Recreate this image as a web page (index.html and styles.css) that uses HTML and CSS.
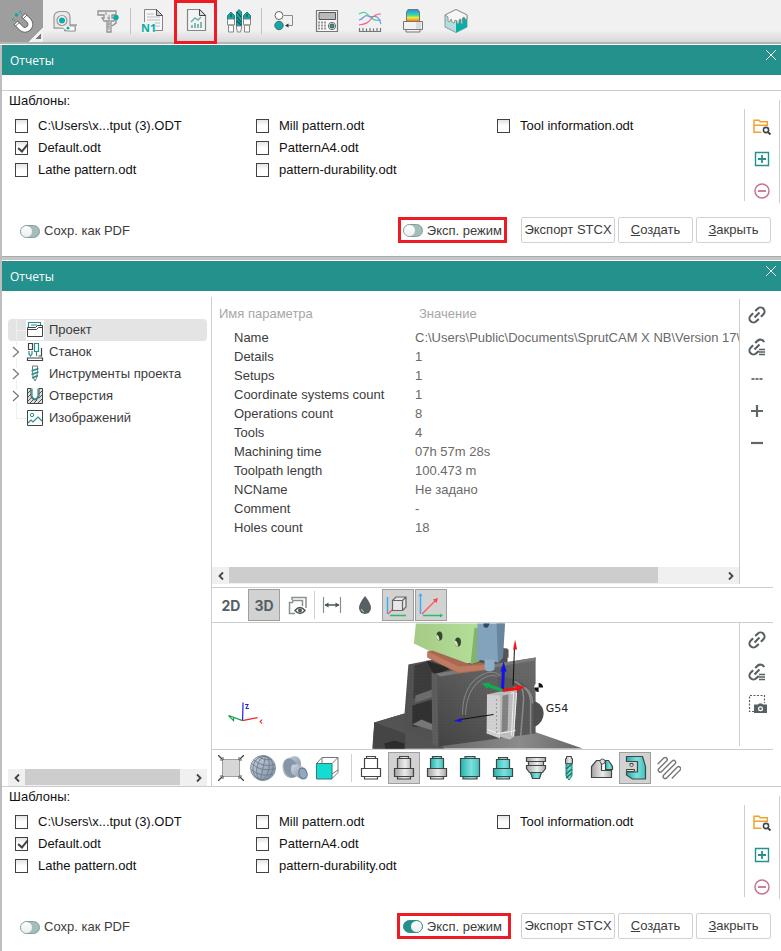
FILE: index.html
```html
<!DOCTYPE html>
<html lang="ru">
<head>
<meta charset="utf-8">
<meta name="viewport" content="width=device-width, initial-scale=1">
<title>Отчеты</title>
<link rel="stylesheet" href="styles.css">
</head>
<body>
<svg class="defs" aria-hidden="true">
  <defs>
    <linearGradient id="teal" x1="0" x2="1"><stop offset="0" stop-color="#1fb3ae"/><stop offset=".55" stop-color="#7fe0dc"/><stop offset="1" stop-color="#3cc4bf"/></linearGradient>
    <linearGradient id="steel" x1="0" x2="1"><stop offset="0" stop-color="#a2a2a2"/><stop offset=".55" stop-color="#ececec"/><stop offset="1" stop-color="#aaa"/></linearGradient>
    <linearGradient id="metal" x1="0" y1="0" x2="1" y2="1"><stop offset="0" stop-color="#cfd8e2"/><stop offset="1" stop-color="#7a899a"/></linearGradient>
    <linearGradient id="rainbow" x1="0" x2="0" y1="0" y2="1"><stop offset="0" stop-color="#3f7be8"/><stop offset=".2" stop-color="#19b6e6"/><stop offset=".45" stop-color="#41d98b"/><stop offset=".65" stop-color="#e6ef3a"/><stop offset=".85" stop-color="#ff9a1f"/><stop offset="1" stop-color="#f0402c"/></linearGradient>
    <symbol id="i-folder" viewBox="0 0 20 20"><path d="M9.500 15.300H2V3.200h5l1.200 1.600H15.300V8.300H2.500" fill="none" stroke="#f5a02c" stroke-width="1.500"/><circle cx="14" cy="13" r="2.600" fill="#fff" stroke="#3f4a4c" stroke-width="1.600"/><path d="m15.800 15 2.700 2.500" stroke="#3f4a4c" stroke-width="2"/></symbol>
    <symbol id="i-add" viewBox="0 0 20 20"><path d="M3.500 3.500h13v13h-13z" fill="#fff" stroke="#25918d" stroke-width="1.400"/><path d="M10 6v8M6 10h8" stroke="#25918d" stroke-width="1.800"/></symbol>
    <symbol id="i-del" viewBox="0 0 20 20"><circle cx="10" cy="10" r="7" fill="#fff" stroke="#c6748d" stroke-width="1.500"/><path d="M6 10h8" stroke="#c6748d" stroke-width="1.800"/></symbol>
    <symbol id="i-link" viewBox="0 0 20 20"><g transform="rotate(-45 10 10)" fill="none" stroke="#566062" stroke-width="2.100"><path d="M8.500 6H5a4 4 0 0 0 0 8h3.500M11.500 6H15a4 4 0 0 1 0 8h-3.500M6.500 10h7"/></g></symbol>
    <symbol id="i-linklist" viewBox="0 0 20 20"><g transform="rotate(-45 10 10)" fill="none" stroke="#566062" stroke-width="2.100"><path d="M8.500 6H5a4 4 0 0 0 0 8h3.500M11.500 6H15a4 4 0 0 1 3.500 5.500M6.500 10h7"/></g><path d="M12 12.500h6M12 15h6M12 17.500h6" stroke="#566062" stroke-width="1.300"/></symbol>
    <symbol id="i-close" viewBox="0 0 12 12"><path d="m1 1 10 10M11 1 1 11" stroke="#fff" stroke-width="1"/></symbol>
    <symbol id="i-left" viewBox="0 0 8 10"><path d="M6 1.500 2.500 5 6 8.500" fill="none" stroke="#444" stroke-width="1.800"/></symbol>
    <symbol id="i-right" viewBox="0 0 8 10"><path d="M2 1.500 5.500 5 2 8.500" fill="none" stroke="#444" stroke-width="1.800"/></symbol>
    <symbol id="i-chevron" viewBox="0 0 8 12"><path d="m1 1 5.500 5L1 11" fill="none" stroke="#777" stroke-width="1.200"/></symbol>
  </defs>
</svg>

<nav class="main-bar" aria-label="Панель инструментов">
  <button class="tool tool-active" aria-label="Привязка"><svg viewBox="0 0 26 26"><path d="m6.500 14.500 6 6a5.400 5.400 0 0 0 7.600-7.600l-6-6" fill="none" stroke="#707070" stroke-width="6"/><path d="m7.100 15.100 5.400 5.400a5.400 5.400 0 0 0 7.600-7.600l-5.400-5.400" fill="none" stroke="#fff" stroke-width="4"/><path d="m10.500 14.200-4 4M18 7l-4 4" stroke="#707070" stroke-width="1"/><circle cx="7.500" cy="7" r="1.700" fill="#0aa"/><path d="m3 12 1.500-1.500M10.500 4.500 12 3M5 13l1-1M12 6l1-1" stroke="#0c8f8c" stroke-width="1"/></svg></button>
  <button class="tool" aria-label="Рулетка"><svg viewBox="0 0 26 26"><path d="M2 20V9q0-5 6-5.500h5q5 .5 5 5.500v11z" fill="#e9e9e9" stroke="#999" stroke-width="1.200"/><path d="M18 17h7M12 22.500h11v-4.500" fill="none" stroke="#999" stroke-width="1.600"/><path d="M2 20h9l4 3h8v-5h-5" fill="#fff" stroke="#999"/><circle cx="10" cy="12.500" r="5" fill="#f7f7f7" stroke="#999" stroke-width="1.200"/><circle cx="10" cy="12.500" r="3" fill="#0aada8"/><circle cx="16" cy="20" r="1.600" fill="#0aada8"/></svg></button>
  <button class="tool" aria-label="Штангенциркуль"><svg viewBox="0 0 26 26"><path d="M3 3h18v4h-4v3h3l-1 3h-3v11h-4V13H9L7 10h2V7H3z" fill="#ececec" stroke="#929292" stroke-width="1.300"/><path d="M11 4v3M14 7v15M12 10h3M12 13h3M12 16h3M12 19h2" stroke="#929292"/><path d="M21 7v8l-4 3" fill="none" stroke="#929292" stroke-width="1.500"/><circle cx="21" cy="9.500" r="2.700" fill="#0aada8"/></svg></button>
  <span class="bar-sep"></span>
  <button class="tool" aria-label="Управляющая программа"><svg viewBox="0 0 26 26"><path d="M4.500 1.500h12l6 6v15h-18z" fill="#f7f7f7" stroke="#868686"/><path d="M16.500 1.500v6h6z" fill="#ccc" stroke="#555"/><path d="M7 6h7M7 9h13M7 12h13M7 15h13M7 18h13" stroke="#bbb"/><path d="M1 14h14v11H1z" fill="#f3f3f3"/><text x="1" y="24" class="icon-n1">N1</text></svg></button>
  <button class="tool tool-marked" aria-label="Отчеты"><svg viewBox="0 0 26 26"><path d="M4.500 1.500h12l6 6v15h-18z" fill="#f4f4f4" stroke="#868686" stroke-width="1.200"/><path d="M16.500 1.500v6h6z" fill="#ddd" stroke="#444"/><path d="M9 20v-3M12 20v-5M15 20v-4M18 20v-6" stroke="#6fb0ad" stroke-width="1.700"/><path d="m8 14 4-4 3 2 3-3" fill="none" stroke="#6fb0ad" stroke-width="1.400"/></svg></button>
  <button class="tool" aria-label="Инструменты"><svg viewBox="0 0 26 26"><path d="M1.500 11V7.500L5 4l3.500 3.500V11zM17.500 11V7.500L21 4l3.500 3.500V11zM10.500 18V4L13 1.500 15.500 4v14z" fill="#0aada8" stroke="#245e5c" stroke-width=".8"/><path d="m11 4 4 5M11 9l4 5M11 13l4 4M5 9V6M21 9V6" stroke="#17504e" stroke-width="1.100"/><path d="M1.500 11h7v6h-7zM17.500 11h7v6h-7zM2.500 17h5v7h-5zM18.500 17h5v7h-5zM10.500 18h5v2l-1 4h-3l-1-4z" fill="#fafafa" stroke="#888"/></svg></button>
  <span class="bar-sep"></span>
  <button class="tool" aria-label="Переходы"><svg viewBox="0 0 26 26"><path d="M13 7.500h8.500v10H16" fill="none" stroke="#8b8b8b"/><path d="m14 17.500 3.500-2v4z" fill="#333"/><circle cx="8" cy="7.500" r="4" fill="#fff" stroke="#666"/><circle cx="8" cy="17.500" r="4.200" fill="#0aada8" stroke="#566"/></svg></button>
  <button class="tool" aria-label="Стойка ЧПУ"><svg viewBox="0 0 26 26"><path d="M2.500 2.500h21v21h-21z" fill="#f7f7f7" stroke="#777" stroke-width="1.200"/><path d="M5 4.500h16.500v7H5z" fill="#b9b9b9" stroke="#555"/><path d="M4 14.500h9M4 17.500h9M4 20.500h9" stroke="#999" stroke-width="2" stroke-dasharray="2 1"/><circle cx="18" cy="18" r="3.600" fill="#fff" stroke="#666"/><circle cx="18" cy="18" r="2" fill="#0aada8" stroke="#444"/></svg></button>
  <button class="tool" aria-label="Графики"><svg viewBox="0 0 26 26"><g fill="none" stroke-width="1.200"><path d="M2 6c6-4 8 0 11 3s7 4 11 3" stroke="#4fd98a"/><path d="M2 12c5-1 5-6 9-4s6-1 9 1 3 5 4 7" stroke="#6a96f5"/><path d="M2 17c7-1 9-2 12-6s6-5 10-5" stroke="#f45a8c"/><path d="M2.500 20v3.500h21V20M6 23v-3M9.500 23v-2.500M13 23v-3M16.500 23v-2.500M20 23v-3" stroke="#777"/></g></svg></button>
  <button class="tool" aria-label="Патрон"><svg viewBox="0 0 26 26"><path d="M6.500 14V4l1.500-2.500h10L19.500 4v10z" fill="url(#rainbow)" stroke="#777"/><path d="M3.500 13.500h19v8h-2.500v2.500H6v-2.500H3.500z" fill="#f2f2f2" stroke="#777"/><path d="M16 14h5v7h-5z" fill="#ccc" opacity=".6"/><path d="M6 21.500h14" stroke="#777"/></svg></button>
  <button class="tool" aria-label="Заготовка"><svg viewBox="0 0 26 26"><path d="m13 1.500 11 5.500v12l-11 5.500L2 19V7z" fill="#b4dedb" stroke="#8a9a9a"/><path d="M13 12.500 24 7v12l-11 5.500z" fill="#0aada8"/><path d="m13 1.500 11 5.500v4l-1.500.5L21 9l-1.500 1v5.500l-1.500.5v-5l-2 1v3l-2 1v-3l-2-1-1 3-2-1-1-3-1 3-2-1V9L2 7z" fill="#f6f6f6" stroke="#808585" stroke-width=".8"/></svg></button>
</nav>

<main>
<section class="dialog" aria-label="Отчеты">
  <header class="title-bar"><h2>Отчеты</h2><button class="close" aria-label="Закрыть окно"><svg><use href="#i-close"/></svg></button></header>
  <div class="spacer"></div>
  <div class="templates">
    <div class="templates-top">
      <fieldset class="files">
        <legend>Шаблоны:</legend>
        <div class="file-grid">
          <label><input type="checkbox">C:\Users\x...tput (3).ODT</label>
          <label><input type="checkbox" checked>Default.odt</label>
          <label><input type="checkbox">Lathe pattern.odt</label>
          <label><input type="checkbox">Mill pattern.odt</label>
          <label><input type="checkbox">PatternA4.odt</label>
          <label><input type="checkbox">pattern-durability.odt</label>
          <label><input type="checkbox">Tool information.odt</label>
        </div>
      </fieldset>
      <div class="file-side"><div class="file-actions">
        <button aria-label="Открыть папку"><svg><use href="#i-folder"/></svg></button>
        <button aria-label="Добавить"><svg><use href="#i-add"/></svg></button>
        <button aria-label="Удалить"><svg><use href="#i-del"/></svg></button>
      </div></div>
    </div>
    <footer class="actions">
      <label class="switch"><input type="checkbox" role="switch">Сохр. как PDF</label>
      <label class="switch switch-marked"><input type="checkbox" role="switch">Эксп. режим</label>
      <div class="buttons">
        <button class="btn btn-wide">Экспорт STCX</button>
        <button class="btn"><u>С</u>оздать</button>
        <button class="btn"><u>З</u>акрыть</button>
      </div>
    </footer>
  </div>
</section>

<div class="gap"></div>

<section class="dialog" aria-label="Отчеты, экспертный режим">
  <header class="title-bar"><h2>Отчеты</h2><button class="close" aria-label="Закрыть окно"><svg><use href="#i-close"/></svg></button></header>
  <div class="report">
    <div class="tree-pane">
      <ul class="tree">
        <li class="leaf selected"><svg class="node-icon" viewBox="0 0 18 18"><path d="M2.500 6V1.500h12V5M5 4h6" fill="none" stroke="#25918d" stroke-width="1.200"/><path d="M1.500 15.500v-9h8l2-2h5v11zM1.500 8.500h9l2-2h4" fill="none" stroke="#444"/></svg>Проект</li>
        <li><svg class="chevron"><use href="#i-chevron"/></svg><svg class="node-icon" viewBox="0 0 18 18"><path d="M2.500.5h4v6h-4z" fill="none" stroke="#444" stroke-width="1.200"/><path d="M8.500.5h4v8h-4zM3 8v3l1.500 2L6 11V8M10.500 9v4" fill="none" stroke="#25918d" stroke-width="1.200"/><path d="M1.500 15h15v2.500h-15zM15.500 5v8h-3" fill="none" stroke="#444" stroke-width="1.200"/></svg>Станок</li>
        <li><svg class="chevron"><use href="#i-chevron"/></svg><svg class="node-icon" viewBox="0 0 18 18"><path d="M6.500 1h5v3l-.5 8-2 4-2-4-.5-8z" fill="none" stroke="#777"/><path d="m5.500 6 7-2.500M5.500 9.500l7-2.500M6 13l6-2.500" stroke="#25918d" stroke-width="1.700"/></svg>Инструменты проекта</li>
        <li><svg class="chevron"><use href="#i-chevron"/></svg><svg class="node-icon" viewBox="0 0 18 18"><path d="M1.500 1.500H5V9q1 4 4 4t4-4V1.500h3.500v15h-15z" fill="#ddd" stroke="#444"/><path d="m2 6 3-3M2 10l3-3M2 14l4-4M4 16l4-4M8 16l3-3M12 16l4-4M13 11l3-3M13 7l3-3" stroke="#555"/><path d="M6 1.500V9q1 3 3 3t3-3V1.500" fill="#fff" stroke="#25918d" stroke-width="1.200"/></svg>Отверстия</li>
        <li class="leaf last"><svg class="node-icon" viewBox="0 0 18 18"><path d="M1.500 1.500h15v15h-15z" fill="#fff" stroke="#444"/><circle cx="6" cy="6" r="1.700" fill="none" stroke="#25918d"/><path d="m2 14 3-3 2 2 5-5 4 4" fill="none" stroke="#25918d" stroke-width="1.200"/></svg>Изображений</li>
      </ul>
      <div class="scroll tree-scroll"><button aria-label="Влево"><svg><use href="#i-left"/></svg></button><span class="track"><span class="thumb thumb-tree"></span></span><button aria-label="Вправо"><svg><use href="#i-right"/></svg></button></div>
    </div>

    <div class="detail">
      <div class="params">
        <div class="params-main">
          <div class="table-wrap">
            <table>
              <thead><tr><th>Имя параметра</th><th>Значение</th></tr></thead>
              <tbody>
                <tr><td>Name</td><td>C:\Users\Public\Documents\SprutCAM X NB\Version 17\</td></tr>
                <tr><td>Details</td><td>1</td></tr>
                <tr><td>Setups</td><td>1</td></tr>
                <tr><td>Coordinate systems count</td><td>1</td></tr>
                <tr><td>Operations count</td><td>8</td></tr>
                <tr><td>Tools</td><td>4</td></tr>
                <tr><td>Machining time</td><td>07h 57m 28s</td></tr>
                <tr><td>Toolpath length</td><td>100.473 m</td></tr>
                <tr><td>NCName</td><td>Не задано</td></tr>
                <tr><td>Comment</td><td>-</td></tr>
                <tr><td>Holes count</td><td>18</td></tr>
              </tbody>
            </table>
          </div>
          <div class="scroll"><button aria-label="Влево"><svg><use href="#i-left"/></svg></button><span class="track"><span class="thumb"></span></span><button aria-label="Вправо"><svg><use href="#i-right"/></svg></button></div>
        </div>
        <div class="side-actions">
          <button aria-label="Ссылка"><svg><use href="#i-link"/></svg></button>
          <button aria-label="Список ссылок"><svg><use href="#i-linklist"/></svg></button>
          <button aria-label="Еще"><svg viewBox="0 0 20 20"><path d="M4.500 10h3M8.500 10h3M12.500 10h3" stroke="#777" stroke-width="2"/></svg></button>
          <button aria-label="Добавить параметр"><svg viewBox="0 0 20 20"><path d="M10 4v12M4 10h12" stroke="#5f6869" stroke-width="2.200"/></svg></button>
          <button aria-label="Убрать параметр"><svg viewBox="0 0 20 20"><path d="M4 10h12" stroke="#5f6869" stroke-width="2.200"/></svg></button>
        </div>
      </div>

      <div class="view-bar">
        <div class="group">
          <button class="mode">2D</button>
          <button class="mode pressed">3D</button>
          <button aria-label="Слои"><svg viewBox="0 0 26 26"><path d="M8 8V5.500h14V16" fill="none" stroke="#8a8f90" stroke-width="1.500"/><path d="M11 21.500H5.500v-11h3L9 8.500h9.500V14" fill="none" stroke="#8a8f90" stroke-width="1.500"/><path d="M11 18.500q5-6 10 0-5 6-10 0z" fill="#fff" stroke="#4f5759" stroke-width="1.500"/><circle cx="16" cy="18.500" r="2" fill="#4f5759"/></svg></button>
        </div>
        <span class="view-sep"></span>
        <div class="group">
          <button aria-label="Размеры"><svg viewBox="0 0 26 26"><path d="M4.500 5v16M21.500 5v16" stroke="#8a8f90" stroke-width="1.200"/><path d="M6 13h14" stroke="#4f5759" stroke-width="1.500"/><path d="m5.500 13 4-2.500v5zM20.500 13l-4-2.500v5z" fill="#4f5759"/></svg></button>
          <button aria-label="Жидкость"><svg viewBox="0 0 26 26"><path d="M13 4q6 7.500 6 12a6 6 0 0 1-12 0q0-4.500 6-12z" fill="#566062"/><path d="M9.500 17q.5 2.500 2.500 3" fill="none" stroke="#ccc"/></svg></button>
          <button class="pressed" aria-label="Габариты"><svg viewBox="0 0 26 26"><path d="M2.500 5v17" stroke="#42aaf0" stroke-width="1.500"/><path d="M5 23.500h16" stroke="#25bf6c" stroke-width="1.500"/><path d="m3 22 6-6" stroke="#f55" stroke-width="1.300"/><path d="M7.500 8.500h10v10h-10zM7.500 8.500l3.500-3.500h10v10l-3.500 3.500M17.500 8.500 21 5" fill="#e6e6e6" stroke="#666" stroke-width="1.200"/></svg></button>
          <button class="pressed" aria-label="Оси"><svg viewBox="0 0 26 26"><path d="M2.500 4v18" stroke="#42aaf0" stroke-width="1.500"/><path d="m2.500 1 2 3h-4z" fill="#42aaf0"/><path d="M5 23.500h17" stroke="#25bf6c" stroke-width="1.500"/><path d="m25 23.500-3-2v4z" fill="#25bf6c"/><path d="M4 22 17 9" stroke="#f55" stroke-width="1.300"/><path d="m20 6-1.500 5-3.500-3.500z" fill="#f44"/></svg></button>
        </div>
      </div>

      <div class="view">
        <svg class="scene" viewBox="0 0 525 125" preserveAspectRatio="xMinYMid meet" role="img" aria-label="Модель станка">
          <defs>
            <linearGradient id="wall" x1="0" y1="1" x2="1" y2="0"><stop offset="0" stop-color="#434343"/><stop offset=".6" stop-color="#5e5e5e"/><stop offset="1" stop-color="#696969"/></linearGradient>
            <linearGradient id="green" x1="0" x2="1"><stop offset="0" stop-color="#a5cb86"/><stop offset="1" stop-color="#b4df98"/></linearGradient>
            <linearGradient id="floor" x1="0" x2="1"><stop offset="0" stop-color="#4b4b4b"/><stop offset=".7" stop-color="#8b8b8b"/><stop offset="1" stop-color="#666"/></linearGradient>
            <pattern id="dots" width="3" height="3" patternUnits="userSpaceOnUse"><path d="M0 0h1v1H0z" fill="#fff" opacity=".05"/><path d="M2 2h1v1H2z" fill="#000" opacity=".07"/></pattern>
          </defs>
          <path d="m161 99 30-9 35 32 94-14 49 17H159z" fill="url(#floor)"/>
          <path d="m161 99 30-9 40 35h-71.500z" fill="#535353"/><path d="m161 99 31 11v15h-32z" fill="#454545"/>
          <path d="m171 120 10-3 10 3v5h-19z" fill="#2c2c2c"/>
          <path d="m195 41 85-17 14 1v48l-67 48-37-16z" fill="#515151"/>
          <path d="m201 42 14-4 20 7-14 7-1 16-20 7z" fill="#3b3b3b"/><path d="m202 72 17-6 2 7-19 6z" fill="#6b6b6b"/>
          <path d="m199 82 20-6v28l-20-1z" fill="#303030"/><path d="m199 101 9-5 12 5v6z" fill="#777"/>
          <path d="m213 37 25 8-14 5v30l-4-1V50z" fill="#292929"/>
          <path d="m222 50 5 3-2 70-6-2-1-72z" fill="#5c5c5c"/>
          <path d="m224 51 98-17v76l-97 13z" fill="url(#wall)"/>
          <path d="m222 50 100-16v3l-95 16z" fill="#7a7a7a"/>
          <path d="M249 91q0-30 20-40 10-5 18 1M252 91q1-27 19-37 8-4 15 0" fill="none" stroke="#838383" stroke-width="1"/>
          <path d="m202.500 0h62v36l-3 3-18 2-43-21z" fill="url(#green)"/><path d="m261 4 5 1v33l-9 3z" fill="#82b46c"/>
          <ellipse cx="226" cy="12.500" rx="3" ry="4.500" fill="#38482e"/><ellipse cx="244.500" cy="18.500" rx="3" ry="4.500" fill="#38482e"/><path d="M223 11q3 1 3 6-4-1-3-6zM241.500 17q3 1 3 6-4-1-3-6z" fill="#d1edbe"/>
          <path d="m214 28 5-1 38 14 9-2 14 3v4l-35 4-31-16z" fill="#a96950"/><path d="m214 28 31 15 35-2v4l-35 4-31-15z" fill="#bf7b62"/>
          <path d="M285 26h10v8l-10 2z" fill="#555"/>
          <path d="M264 0h27l-2 34-4 5-22-3z" fill="#83a2bc"/><path d="M283 0h8.500l-2 33-5 6z" fill="#68859e"/><path d="M271 36h10v10q-5 4-10 0z" fill="#8faec8"/><path d="M270 0h6q-2 7-6 3z" fill="#34485a"/>
          <path d="M283 53q30 1 37 20l1 36-29 4z" fill="#585858"/><path d="M306 62q10 3 11 15v34M311 64q8 5 8 16M301 58q9 3 9 18l-3 38" fill="none" stroke="#8a8a8a" stroke-width="1.500"/><path d="M322 78q8 4 8 12t-8 13l-2-1V79z" fill="#4e4e4e"/>
          <path d="m273.500 71 13-3 17-5-3 50-4 3-12-3-11.500-3z" fill="#bdbdbd"/><path d="m273.500 71 13 1v43l-13-5z" fill="#d1d1d1"/><path d="m289 72 6-1-1 36-6 2z" fill="#828282"/><path d="m297 70 3-1-2 43M303 69l-3 44M274 106l11 4 17-3" fill="none" stroke="#eee"/><path d="M283 76v33" stroke="#666" stroke-dasharray="1 3"/>
          <path d="M195 105V41l28 9 98-15v73l-94 14z" fill="url(#dots)"/>
          <path d="M299.500 62 301 22M280 91l-33 5" stroke="#111"/><path d="m301.500 16 2 10h-4z" fill="#f01818"/><path d="m240 97.500 8-3v4z" fill="#1212f0"/>
          <path d="m289 67 1-24" stroke="#1212f0" stroke-width="3"/><path d="m290 38 3 10h-6z" fill="#1212f0"/>
          <path d="m289 67-14-5" stroke="#0ab04c" stroke-width="3"/><path d="m268 60 9-1-3 6z" fill="#0ab04c"/>
          <path d="m289 67 15-2" stroke="#e81414" stroke-width="3"/><path d="m311 63.500-9-2.500 2 7z" fill="#e81414"/>
          <circle cx="325" cy="64" r="4.500" fill="#fff"/><path d="M325 64v-4.500a4.500 4.500 0 0 1 4.500 4.500zM325 64v4.500a4.500 4.500 0 0 1-4.500-4.500z" fill="#111"/>
          <text x="332" y="88" class="scene-label">G54</text>
          <path d="m29.500 97 .5-18" stroke="#2424e0" stroke-width="1.200"/><path d="m29.500 97 15-3" stroke="#e22" stroke-width="1.200"/><path d="m29.500 97-14-5 5 5v-3" fill="none" stroke="#1a9b50" stroke-width="1.200"/>
          <path d="M32 81h3l-2 4h3" fill="none" stroke="#2424e0"/><path d="m49 96-2 2 2 2" fill="none" stroke="#e22"/>
        </svg>
        <div class="side-actions">
          <button aria-label="Ссылка"><svg><use href="#i-link"/></svg></button>
          <button aria-label="Список ссылок"><svg><use href="#i-linklist"/></svg></button>
          <button aria-label="Снимок"><svg viewBox="0 0 20 20"><path d="M7 17.500H2.500v-16h15V9" fill="none" stroke="#566062" stroke-width="1.200" stroke-dasharray="2 1.500"/><path d="M7 10.500h4l1-1h3l1 1h4V19H7z" fill="#566062"/><circle cx="13.500" cy="14.700" r="1.900" fill="none" stroke="#fff" stroke-width="1.200"/></svg></button>
        </div>
      </div>

      <div class="shape-bar">
        <div class="group tight">
          <button aria-label="Показать все"><svg viewBox="0 0 26 26"><path d="M4.500 4.500h17v17h-17z" fill="#d6d6d6" stroke="#555" stroke-dasharray="1 1"/><path d="m0 0 4 4M26 0l-4 4M0 26l4-4M26 26l-4-4" stroke="#444" stroke-width="1.300"/><path d="M5 2v3H2M21 2v3h3M5 24v-3H2M21 24v-3h3" fill="none" stroke="#555"/></svg></button>
          <button aria-label="Сфера"><svg viewBox="0 0 26 26"><circle cx="13" cy="13" r="12.500" fill="url(#metal)" stroke="#8795a3"/><g fill="none" stroke="#6e8092" stroke-width=".9" transform="rotate(12 13 13)"><path d="M1 11q12 7 24 0M2 7q11 6 22 0M2 17q11 6 22 0M6 3q7 3 14 0M13 1v24"/><ellipse cx="13" cy="13" rx="6" ry="12"/><ellipse cx="13" cy="13" rx="10" ry="12"/></g></svg></button>
          <button aria-label="Цилиндр"><svg viewBox="0 0 26 26"><path d="M.5 13Q0 5 6 3l6-2q7 0 7 9 0 8-6 12l-4 1Q1 22 .5 13z" fill="url(#metal)"/><ellipse cx="9" cy="13" rx="7" ry="10" transform="rotate(-25 9 13)" fill="#8696a6"/><path d="m10 10 5-1 8 4q3 3 1 8t-5 3l-9-5q-2-5 0-9z" fill="url(#metal)"/><ellipse cx="21" cy="18.500" rx="4" ry="5.500" transform="rotate(-20 21 18.500)" fill="#90a8c0" stroke="#63798f"/></svg></button>
          <button aria-label="Куб"><svg viewBox="0 0 26 26"><path d="M2.500 8.500 8 2.500h16v15l-6 6M8 2.500v6M18 8.500l6-6M18 19l6-4" fill="none" stroke="#777"/><path d="M2.500 8.500h15.500v15.500H2.500z" fill="#14dcd2" stroke="#3b7774"/></svg></button>
        </div>
        <span class="view-sep shape-sep"></span>
        <div class="group">
          <button aria-label="Контур патрона"><svg viewBox="0 0 26 26"><path d="M8.500 1.500h9v2h2v10h3v8h-3v2.500h-13v-2.500h-3v-8h3v-10h2zM6.500 3.500h13M6.500 13.500h13M6.500 21.500h13" fill="#fff" stroke="#444" stroke-width="1.200"/></svg></button>
          <button class="pressed" aria-label="Патрон"><svg viewBox="0 0 26 26"><path d="M8.500 1.500h9v2h2v10h3v8h-3v2.500h-13v-2.500h-3v-8h3v-10h2zM6.500 3.500h13M6.500 13.500h13M6.500 21.500h13" fill="url(#steel)" stroke="#444" stroke-width="1.200"/></svg></button>
          <button aria-label="Деталь"><svg viewBox="0 0 26 26"><path d="M3.500 13.500h19v8h-3v2.500h-13v-2.500h-3zM6.500 21.500h13" fill="url(#steel)" stroke="#444" stroke-width="1.200"/><path d="M8.500 1.500h9v2h2v10h-13v-10h2zM6.500 3.500h13" fill="url(#teal)" stroke="#444" stroke-width="1.200"/></svg></button>
          <button aria-label="Заготовка"><svg viewBox="0 0 26 26"><path d="M8 1.500h10v2h4.500v18H20v2.500H6v-2.500H3.500v-18H8zM6 21.500h14M6 3.500h14" fill="url(#teal)" stroke="#444" stroke-width="1.200"/></svg></button>
          <button aria-label="Сборка"><svg viewBox="0 0 26 26"><path d="M8.500 2.500h9v2h2v9h3v8h-3v2.500h-13v-2.500h-3v-8h3v-9h2zM6.500 4.500h13M6.500 13.500h13M6.500 21.500h13" fill="url(#teal)" stroke="#444" stroke-width="1.200"/></svg></button>
          <button aria-label="Оправка"><svg viewBox="0 0 26 26"><path d="M3.500 2.500h19v4h-2v4h2v3l-3 4h-13l-3-4v-3h2v-4h-2zM5 6.500h16M5 10.500h16" fill="url(#steel)" stroke="#444" stroke-width="1.200"/><path d="M7.500 17.500h11l-2 6h-7z" fill="url(#teal)" stroke="#444" stroke-width="1.200"/></svg></button>
          <button aria-label="Сверло"><svg viewBox="0 0 26 26"><path d="M10.500 1.500h5v2h1v5h-7v-5h1z" fill="url(#steel)" stroke="#444"/><path d="M10 9h6v12l-3 4-3-4z" fill="url(#teal)" stroke="#386"/><path d="m10 14 6-5M10 19l6-5M10 23l6-5" stroke="#286b69" stroke-width="1.300"/></svg></button>
          <button aria-label="Тиски"><svg viewBox="0 0 26 26"><path d="M2.500 22.500v-11l5-6h5v10h10v7z" fill="url(#steel)" stroke="#444" stroke-width="1.200"/><path d="M16.500 5.500h3l4 6v3h-7z" fill="url(#teal)" stroke="#444" stroke-width="1.200"/><circle cx="13.500" cy="6.500" r="2.500" fill="#ddd" stroke="#555"/></svg></button>
          <button class="pressed" aria-label="Станок"><svg viewBox="0 0 26 26"><path d="M4.500 1.500h16l3 10v12.500h-13l-6-4v-3h11V6.500H4.500z" fill="url(#teal)" stroke="#444" stroke-width="1.200"/><path d="M4.500 14.500h8v2h-8zM8 8.500h3v2L9.500 12 8 10.500z" fill="#ddd" stroke="#444"/></svg></button>
          <button aria-label="Траектория"><svg viewBox="0 0 26 26"><path d="M9 3h8a2 2 0 0 1 0 4H6a2 2 0 0 0 0 4h15a2 2 0 0 1 0 4H5a2 2 0 0 0 0 4h15a2 2 0 0 1 0 4H9" transform="rotate(-45 13 13)" fill="none" stroke="#777" stroke-width="1.400" stroke-linecap="round"/></svg></button>
        </div>
      </div>
    </div>
  </div>

  <div class="templates">
    <div class="templates-top">
      <fieldset class="files">
        <legend>Шаблоны:</legend>
        <div class="file-grid">
          <label><input type="checkbox">C:\Users\x...tput (3).ODT</label>
          <label><input type="checkbox" checked>Default.odt</label>
          <label><input type="checkbox">Lathe pattern.odt</label>
          <label><input type="checkbox">Mill pattern.odt</label>
          <label><input type="checkbox">PatternA4.odt</label>
          <label><input type="checkbox">pattern-durability.odt</label>
          <label><input type="checkbox">Tool information.odt</label>
        </div>
      </fieldset>
      <div class="file-side"><div class="file-actions">
        <button aria-label="Открыть папку"><svg><use href="#i-folder"/></svg></button>
        <button aria-label="Добавить"><svg><use href="#i-add"/></svg></button>
        <button aria-label="Удалить"><svg><use href="#i-del"/></svg></button>
      </div></div>
    </div>
    <footer class="actions">
      <label class="switch"><input type="checkbox" role="switch">Сохр. как PDF</label>
      <label class="switch switch-marked switch-roomy"><input type="checkbox" role="switch" checked>Эксп. режим</label>
      <div class="buttons">
        <button class="btn btn-wide">Экспорт STCX</button>
        <button class="btn"><u>С</u>оздать</button>
        <button class="btn"><u>З</u>акрыть</button>
      </div>
    </footer>
  </div>
</section>
</main>
</body>
</html>
```

FILE: styles.css
```css
:root {
  --teal: #25918d;
  --line: #cdcdcd;
  --text: #3c3c3c;
  --mark: #ed1c24;
}

* { box-sizing: border-box; }

body {
  margin: 0;
  background: #fff;
  color: var(--text);
  font: 13px/20px "Liberation Sans", sans-serif;
}

button {
  margin: 0;
  padding: 0;
  border: 0;
  background: none;
  color: inherit;
  font: inherit;
}

svg { display: block; flex: none; }

.defs { position: absolute; width: 0; height: 0; }

/* Main toolbar */
.main-bar {
  display: flex;
  height: 45px;
  background: linear-gradient(#f1f1f1 0 30px, #d8d8d8 42px, #b4b4b4 42px 44px, #fff 44px);
}

.tool {
  position: relative;
  display: grid;
  place-items: center;
  width: 43px;
  height: 42px;
}

.tool svg { width: 26px; height: 26px; }

.tool-active { background: linear-gradient(135deg, #9e9e9e 83%, #f1f1f1 83%); }

.tool-active::after {
  content: "";
  position: absolute;
  right: 2px;
  bottom: 3px;
  width: 5px;
  height: 5px;
  background: linear-gradient(135deg, transparent 50%, #777 50%);
}

.tool-marked { height: 44px; padding-bottom: 2px; border: 3px solid var(--mark); }

.bar-sep { width: 1px; height: 26px; margin: 8px 0 0 1px; background: #c2c2c2; }

.icon-n1 { font: bold 11px "Noto Sans", sans-serif; fill: #0aada8; }

/* Dialog */
main { border-left: 2px solid #bdbdbd; }

.title-bar {
  display: flex;
  justify-content: space-between;
  height: 30px;
  padding-left: 8px;
  background: var(--teal);
  color: #fff;
}

.title-bar h2 { margin: 0; font: 12px/32px "Open Sans", sans-serif; }

.close { width: 20px; height: 20px; display: grid; place-items: center; }
.close svg { width: 12px; height: 12px; }

.spacer { height: 16px; border-bottom: 1px solid var(--line); }

.gap {
  height: 5px;
  background: linear-gradient(#a9a9a9 0 1px, #c6c6c6 1px 4px, #fff 4px);
}

/* Templates */
.templates { padding-bottom: 13px; color: #111; }

.templates-top { display: flex; }

.files { flex: 1; min-width: 0; margin: 0; padding: 0; border: 0; }
.files legend { padding: 0 0 4px 7px; }

.file-grid {
  display: grid;
  grid-template-columns: repeat(3, 1fr);
  grid-template-rows: repeat(3, 22px);
  grid-auto-flow: column;
  padding: 0 6px 0 13px;
}

.file-grid label { display: flex; align-items: center; gap: 10px; white-space: nowrap; }

.file-grid input {
  appearance: none;
  width: 13px;
  height: 14px;
  margin: 0;
  border: 1px solid #3f4244;
  background: linear-gradient(#e4e4e4, #fff 50%);
}

.file-grid input:checked::after {
  content: "";
  display: block;
  width: 4px;
  height: 8px;
  margin: 0 0 0 4px;
  border: solid #3f4244;
  border-width: 0 2px 2px 0;
  transform: rotate(40deg);
}

.file-side { margin: 9px 1px 0 0; padding: 9px 0 2px; border-right: 1px solid var(--line); }

.file-actions { width: 35px; height: 92px; padding-top: 2px; border-left: 1px solid var(--line); }

.file-actions button,
.side-actions button { display: grid; place-items: center; width: 100%; height: 32px; }

.file-actions svg,
.side-actions svg { width: 20px; height: 20px; }

.actions {
  display: flex;
  align-items: center;
  margin-top: 14px;
  padding: 0 10px 0 18px;
  color: var(--text);
}

.switch { display: flex; align-items: center; gap: 4px; height: 26px; padding-top: 2px; white-space: nowrap; }

.switch input {
  appearance: none;
  width: 20px;
  height: 13px;
  margin: 0;
  padding: 0;
  border: 1px solid #7fa09e;
  border-radius: 7px;
  background: #a4bcba;
}

.switch input::after {
  content: "";
  display: block;
  width: 11px;
  height: 11px;
  border-radius: 50%;
  background: linear-gradient(#fff, #ededed);
}

.switch input:checked { border-color: var(--teal); background: var(--teal); padding-left: 7px; }

.switch-marked { margin-left: auto; margin-right: 14px; padding: 1px 2px 0; border: 3px solid var(--mark); }
.switch-roomy { margin-right: 10px; padding-left: 3px; padding-right: 6px; }

.buttons { display: flex; gap: 3px; }

.btn {
  width: 75px;
  height: 26px;
  border: 1px solid #d2d2d2;
  border-radius: 2px;
  background: #fff;
  white-space: nowrap;
}

.btn-wide { width: 94px; }

/* Report body */
.report { display: flex; border-bottom: 1px solid var(--line); }

.tree-pane {
  display: flex;
  flex-direction: column;
  flex: none;
  width: 210px;
  margin-top: 6px;
  padding: 22px 4px 0 6px;
  border-right: 1px solid var(--line);
}

.tree { margin: 0; padding: 0; list-style: none; }

.tree li {
  position: relative;
  display: flex;
  align-items: center;
  height: 22px;
  padding-left: 18px;
}

.tree li::before {
  content: "";
  position: absolute;
  left: 8px;
  top: 0;
  height: 22px;
  border-left: 1px solid #efefef;
}

.tree .last::before { height: 11px; }

.tree .leaf::after {
  content: "";
  position: absolute;
  left: 8px;
  width: 10px;
  border-top: 1px solid #efefef;
}

.tree .selected { border-radius: 4px; background: #e4e4e4; }

.node-icon { width: 18px; height: 20px; margin-right: 5px; background: #fff; }

.chevron {
  position: absolute;
  z-index: 1;
  left: 4px;
  width: 8px;
  height: 12px;
  background: #fff;
}

.scroll { display: flex; height: 17px; background: #f0f0f0; }
.scroll button { display: grid; place-items: center; width: 17px; }
.scroll svg { width: 8px; height: 10px; }
.track { flex: 1; display: flex; }
.thumb { width: 87%; height: 16px; background: #cdcdcd; }
.thumb-tree { width: 94%; }
.tree-scroll { margin-top: auto; }

.detail { flex: 1; min-width: 0; padding-right: 8px; }

.params { display: flex; padding-top: 8px; border-bottom: 1px solid var(--line); }

.params-main { flex: 1; min-width: 0; padding-bottom: 3px; }

.table-wrap { overflow: hidden; padding: 5px 0 30px 7px; }

table { width: 100%; table-layout: fixed; border-collapse: collapse; white-space: nowrap; }

th { height: 24px; padding: 0 0 4px; color: #a6a6a6; font-weight: normal; line-height: 20px; text-align: left; }
th:first-child { width: 196px; }
th:last-child { padding-left: 4px; }

td { height: 19px; padding: 0; line-height: 19px; }
td:first-child { padding-left: 15px; }
td:last-child { color: #6a6a6a; overflow: hidden; }

.side-actions { flex: none; width: 34px; margin-bottom: 3px; border-left: 1px solid var(--line); }

.view-bar,
.shape-bar { display: flex; align-items: center; padding: 1px 0 1px 3px; }

.view-bar { border-bottom: 1px solid var(--line); }

.group { display: flex; gap: 1px; }
.group.tight { gap: 0; }

.group button {
  display: grid;
  place-items: center;
  width: 32px;
  height: 32px;
  border: 1px solid transparent;
}

.group .pressed { border-color: #9f9f9f; background: #d2d2d2; }
.group svg { width: 26px; height: 26px; }

.group .mode { color: #566062; font: bold 14px "Inter", sans-serif; }

.view-sep { width: 1px; height: 28px; margin: 0 1px; background: #d0d0d0; }
.shape-sep { margin: 0 3px 0 8px; }

.view { display: flex; height: 127px; padding-left: 1px; border-bottom: 1px solid var(--line); }
.view .side-actions { padding-top: 1px; }
.scene { flex: 1; min-width: 0; width: 100%; height: 126px; }
.scene-label { font: 11px "DejaVu Sans", sans-serif; fill: #222; }

.shape-bar { padding: 2px 0 2px 3px; }
```
